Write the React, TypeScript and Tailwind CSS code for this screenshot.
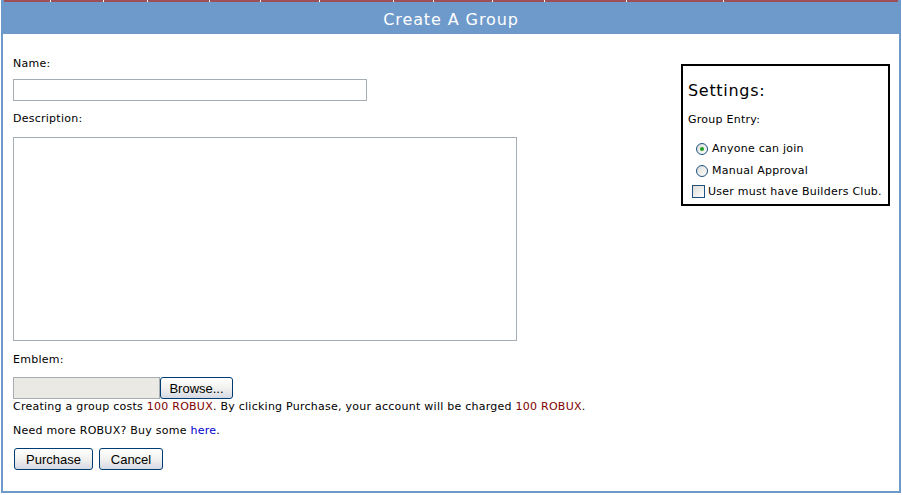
import React from "react";

const tabWidths = ["w-[46px]", "w-[52px]", "w-[43px]", "w-[61px]", "w-[50px]", "w-[58px]", "w-[73px]", "w-[39px]", "w-[58px]", "w-[51px]", "w-[81px]", "w-[96px]"];

function XpButton({ label, className }: { label: string; className: string }) {
    return (
        <button
            className={`h-[22px] rounded-[3px] border border-[#003c74] bg-gradient-to-b from-white via-[#f1f1ee] to-[#d5d9e4] font-['Liberation_Sans',Arial,sans-serif] text-[13px] leading-none tracking-normal text-black ${className}`}
        >
            {label}
        </button>
    );
}

function Radio({ checked, label }: { checked?: boolean; label: string }) {
    return (
        <div className="flex h-[13px] items-center">
            <span className="ml-[13px] flex h-[12px] w-[12px] items-center justify-center rounded-full border border-[#1c5180] bg-gradient-to-br from-[#dcdcd7] to-white">
                {checked && <span className="h-[4px] w-[4px] rounded-full bg-[#21a121]" />}
            </span>
            <span className="ml-[4px] leading-[13px]">{label}</span>
        </div>
    );
}

export default function App() {
    return (
        <div className="h-[495px] w-[902px] bg-white pl-[1px] font-['DejaVu_Sans',Verdana,sans-serif] text-[11px] tracking-[0.25px] text-black">
            <div className="flex h-[493px] w-[900px] flex-col border-x-2 border-b-2 border-[#6e9acb]">
                {/* header */}
                <div className="flex h-[34px] flex-col bg-[#6e9acb]">
                    <div className="mx-px flex h-[2px] gap-px bg-white">
                        {tabWidths.map((w, i) => (
                            <div key={i} className={`${w} bg-[#9c4f56]`} />
                        ))}
                        <div className="flex-1 bg-[#9c4f56]" />
                    </div>
                    <div className="flex flex-1 items-center justify-center pt-[3px] text-[16px] leading-none tracking-[0.9px] text-white">
                        Create A Group
                    </div>
                </div>

                <div className="flex flex-1 justify-between pl-[10px] pr-[9px]">
                    {/* form */}
                    <div className="flex flex-col pt-[23px]">
                        <p className="leading-[13px]">Name:</p>
                        <input className="mt-[9px] h-[22px] w-[354px] border border-[#a5acb2] bg-white outline-none" />
                        <p className="mt-[11px] leading-[13px]">Description:</p>
                        <textarea className="mt-[12px] h-[204px] w-[504px] resize-none border border-[#a5acb2] bg-white outline-none" />
                        <p className="mt-[12px] leading-[13px]">Emblem:</p>
                        <div className="mt-[11px] flex h-[22px]">
                            <div className="h-[22px] w-[147px] border border-[#a5acb2] bg-[#ebe9e3]" />
                            <XpButton label="Browse..." className="w-[73px]" />
                        </div>
                        <p className="mt-[1px] whitespace-nowrap leading-[13px]">
                            Creating a group costs <span className="text-[#800000]">100 ROBUX</span>. By clicking Purchase, your account will be charged{" "}
                            <span className="text-[#800000]">100 ROBUX</span>.
                        </p>
                        <p className="mt-[11px] leading-[13px]">
                            Need more ROBUX? Buy some <a className="text-[#0000cc]">here</a>.
                        </p>
                        <div className="mt-[11px] flex gap-[6px] pl-px">
                            <XpButton label="Purchase" className="w-[79px]" />
                            <XpButton label="Cancel" className="w-[64px]" />
                        </div>
                    </div>

                    {/* settings */}
                    <div className="mt-[30px] h-[142px] w-[209px] border-2 border-black pt-[15px]">
                        <h2 className="pl-[5px] text-[16px] leading-[19px] tracking-[0.7px]">Settings:</h2>
                        <p className="mt-[13px] pl-[5px] leading-[13px]">Group Entry:</p>
                        <div className="mt-[16px]">
                            <Radio checked label="Anyone can join" />
                        </div>
                        <div className="mt-[9px]">
                            <Radio label="Manual Approval" />
                        </div>
                        <div className="mt-[8px] flex h-[13px] items-center">
                            <span className="ml-[9px] h-[13px] w-[13px] border border-[#1c5180] bg-gradient-to-br from-[#dcdcd7] to-white" />
                            <span className="ml-[3px] whitespace-nowrap leading-[13px]">User must have Builders Club.</span>
                        </div>
                    </div>
                </div>
            </div>
        </div>
    );
}
